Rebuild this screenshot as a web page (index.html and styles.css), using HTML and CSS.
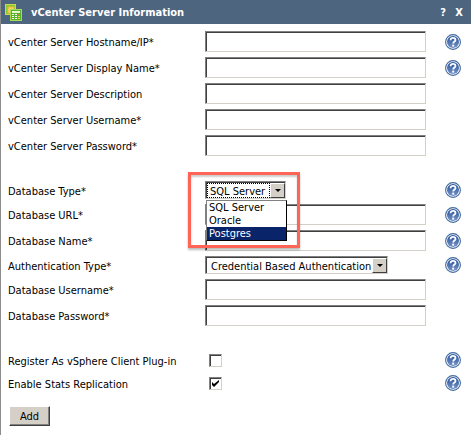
FILE: index.html
```html
<!DOCTYPE html>
<html lang="en">
<head>
<meta charset="utf-8">
<title>vCenter Server Information</title>
<link rel="stylesheet" href="styles.css">
</head>
<body>
<svg width="0" height="0" class="defs" aria-hidden="true">
  <defs>
    <linearGradient id="ball" x1="0" y1="0" x2="0" y2="1"><stop offset="0" stop-color="#24509a"/><stop offset="1" stop-color="#7795c6"/></linearGradient>
    <symbol id="help" viewBox="0 0 16 16">
      <circle cx="8" cy="8" r="7.4" fill="#fff" stroke="#40699f" stroke-width="1.100"/>
      <circle cx="8" cy="8" r="6" fill="url(#ball)"/>
      <path d="M5.6 6.2C5.6 4.6 6.6 3.8 8 3.8s2.5.8 2.5 2.1C10.500 7.500 8.200 7.600 8.200 9.500" fill="none" stroke="#fff" stroke-width="1.8"/>
      <rect x="7.200" y="10.600" width="2" height="2" fill="#fff"/>
    </symbol>
  </defs>
</svg>
<main class="panel">
  <header class="titlebar">
    <svg class="logo" viewBox="0 0 17 17" aria-hidden="true">
      <rect x=".5" y=".5" width="10" height="10" fill="#8cc832" stroke="#c5dc48"/>
      <rect x="3" y="3" width="6" height="6" fill="#f5d568" stroke="#e8b838"/>
      <rect x="5.500" y="5.500" width="11" height="11" fill="#57b52b" stroke="#a5dc53"/>
      <rect x="7" y="7" width="8" height="2" fill="#eaf7d4"/>
      <path d="M7 10h2v1H7zM10 10h2v1h-2zM7 12h2v1H7zM10 12h2v1h-2zM7 14h2v1H7zM10 14h2v1h-2z" fill="#fff"/>
      <path d="M13 10h2v1h-2z" fill="#ef6a35"/><path d="M13 12h2v1h-2zM13 14h2v1h-2z" fill="#f3d94c"/>
    </svg>
    <h1>vCenter Server Information</h1>
    <button type="button" class="tool">?</button>
    <button type="button" class="tool">X</button>
  </header>
  <form class="form">
    <div class="group">
      <div class="row"><label for="host">vCenter Server Hostname/IP*</label><input class="text" id="host" type="text"><button type="button" class="help" aria-label="Help"><svg><use href="#help"/></svg></button></div>
      <div class="row"><label for="display">vCenter Server Display Name*</label><input class="text" id="display" type="text"><button type="button" class="help" aria-label="Help"><svg><use href="#help"/></svg></button></div>
      <div class="row"><label for="desc">vCenter Server Description</label><input class="text" id="desc" type="text"></div>
      <div class="row"><label for="user">vCenter Server Username*</label><input class="text" id="user" type="text"></div>
      <div class="row"><label for="pass">vCenter Server Password*</label><input class="text" id="pass" type="password"></div>
    </div>
    <div class="group">
      <div class="row short">
        <label for="dbtype">Database Type*</label>
        <div class="field">
          <div class="combo focused">
            <select id="dbtype"><option>SQL Server</option><option>Oracle</option><option>Postgres</option></select>
            <span class="arrow"></span>
            <ul class="list" role="listbox" aria-label="Database Type"><li role="option">SQL Server</li><li role="option">Oracle</li><li role="option" class="active" aria-selected="true">Postgres</li></ul>
            <div class="callout"></div>
          </div>
        </div>
        <button type="button" class="help" aria-label="Help"><svg><use href="#help"/></svg></button>
      </div>
      <div class="row"><label for="dburl">Database URL*</label><input class="text" id="dburl" type="text"><button type="button" class="help" aria-label="Help"><svg><use href="#help"/></svg></button></div>
      <div class="row"><label for="dbname">Database Name*</label><input class="text" id="dbname" type="text"><button type="button" class="help" aria-label="Help"><svg><use href="#help"/></svg></button></div>
      <div class="row short">
        <label for="auth">Authentication Type*</label>
        <div class="field"><div class="combo wide"><select id="auth"><option>Credential Based Authentication</option></select><span class="arrow"></span></div></div>
        <button type="button" class="help" aria-label="Help"><svg><use href="#help"/></svg></button>
      </div>
      <div class="row"><label for="dbuser">Database Username*</label><input class="text" id="dbuser" type="text"></div>
      <div class="row"><label for="dbpass">Database Password*</label><input class="text" id="dbpass" type="password"></div>
    </div>
    <div class="group">
      <div class="row short"><label for="register">Register As vSphere Client Plug-in</label><div class="field"><span class="tick"><input type="checkbox" id="register"></span></div><button type="button" class="help" aria-label="Help"><svg><use href="#help"/></svg></button></div>
      <div class="row short"><label for="stats">Enable Stats Replication</label><div class="field"><span class="tick"><input type="checkbox" id="stats" checked><svg viewBox="0 0 7 7" aria-hidden="true"><path d="M0 2v3l2 2 5-5V0L2 4z"/></svg></span></div><button type="button" class="help" aria-label="Help"><svg><use href="#help"/></svg></button></div>
    </div>
    <button type="button" class="add">Add</button>
  </form>
</main>
</body>
</html>
```
FILE: styles.css
```css
* { box-sizing: border-box; }

body {
  margin: 0;
  background: #fff;
  color: #000;
  font-family: "DejaVu Sans Condensed", "DejaVu Sans", sans-serif;
  font-size: 11px;
  line-height: 13px;
}

button, input, select { font: inherit; color: inherit; border-radius: 0; }
.defs { position: absolute; }

.panel { min-height: 100vh; border-left: 1px solid #8c8c8c; }

.titlebar {
  display: flex;
  align-items: center;
  height: 24px;
  padding: 0 4px;
  background: #4e657f;
  color: #fff;
}
.logo { width: 17px; height: 17px; }
h1 { flex: 1; margin: 0 0 0 9px; font-size: 11px; line-height: 13px; }
.tool { width: 16px; padding: 0; border: 0; background: none; font-weight: bold; text-align: center; }

.form { padding: 7px 10px 9px 7px; }
.group { display: grid; gap: 5px; margin-bottom: 25px; }
.group:last-of-type { margin-bottom: 14px; }

.row {
  display: grid;
  grid-template-columns: 197px minmax(0, 1fr) 16px;
  column-gap: 19px;
  align-items: center;
  height: 21px;
}
.row label { margin-right: -19px; padding-top: 2px; white-space: nowrap; }
.row .text, .row .field { margin-left: -19px; }
.row.short { height: 18px; }

.text, .combo, .tick input {
  border: 1px solid;
  border-color: #808080 #d4d0c8 #d4d0c8 #808080;
  background: #fff;
  box-shadow: inset 1px 1px #404040;
}
.text { width: calc(100% + 19px); height: 21px; padding: 0 4px; outline: 0; }

.help { width: 16px; height: 16px; padding: 0; border: 0; background: none; }
.help svg { display: block; width: 16px; height: 16px; }

.field { display: flex; align-items: center; }
.combo { position: relative; display: flex; width: 81px; height: 18px; padding: 1px 0 0 1px; }
.combo.wide { width: 183px; }
.combo select {
  flex: 1;
  min-width: 0;
  padding: 1px 0 0 3px;
  border: 0;
  outline: 0;
  background: none;
  appearance: none;
}
.combo.wide select { padding-left: 4px; }
.combo.focused select { outline: 1px dotted #000; outline-offset: -1px; }
.arrow {
  display: grid;
  place-items: center;
  width: 15px;
  border: 1px solid;
  border-color: #fff #404040 #404040 #fff;
  background: #d4d0c8;
  pointer-events: none;
}
.arrow::before { content: ""; border: 3px solid transparent; border-top-color: #000; border-bottom: 0; }

.list {
  position: absolute;
  z-index: 1;
  top: 18px;
  left: 0;
  width: 81px;
  margin: 0;
  padding: 0;
  border: 1px solid #000;
  border-color: #808080 #000 #000 #808080;
  background: #fff;
  list-style: none;
}
.list li { padding: 0 2px; }
.list .active { background: #0a246a; color: #fff; }
.callout {
  position: absolute;
  z-index: 2;
  top: -10px;
  left: -18px;
  width: 112px;
  height: 76px;
  border: 3px solid #ff6557;
  box-shadow: 0 2px 2px #0004, inset 0 2px 2px #0003;
  pointer-events: none;
}

.tick { position: relative; display: block; width: 13px; height: 13px; margin-left: 4px; }
.tick input { display: block; width: 13px; height: 13px; margin: 0; appearance: none; }
.tick svg { position: absolute; top: 3px; left: 3px; width: 7px; height: 7px; pointer-events: none; }

.add {
  display: block;
  height: 20px;
  margin-left: 1px;
  padding: 0 10px;
  border: 1px solid;
  border-color: #fff #404040 #404040 #fff;
  background: #d4d0c8;
  box-shadow: inset -1px -1px #808080;
}
```
